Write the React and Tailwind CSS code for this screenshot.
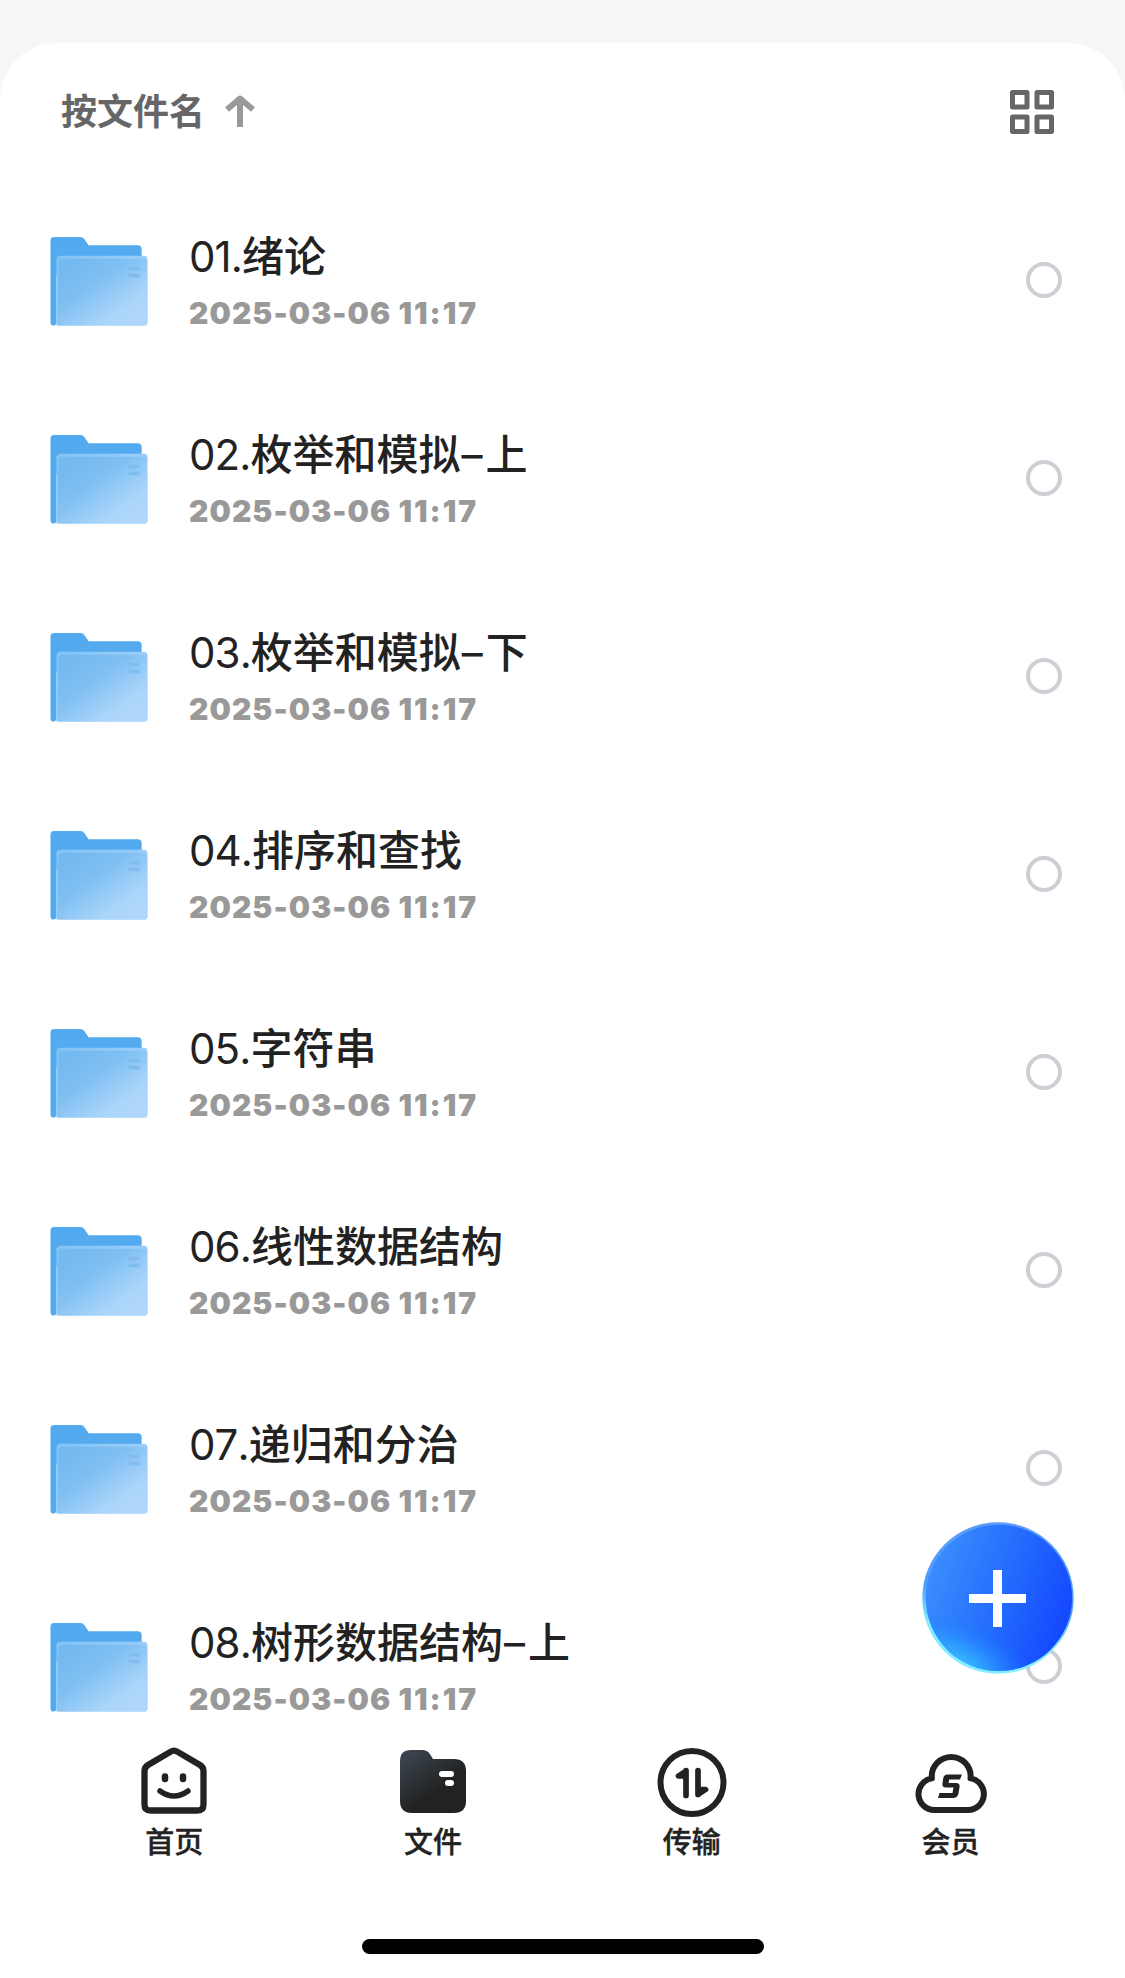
const files = [
  ["01.", "绪论"],
  ["02.", "枚举和模拟", "上"],
  ["03.", "枚举和模拟", "下"],
  ["04.", "排序和查找"],
  ["05.", "字符串"],
  ["06.", "线性数据结构"],
  ["07.", "递归和分治"],
  ["08.", "树形数据结构", "上"],
];

function FolderIcon() {
  return (
    <svg width="98" height="90" viewBox="-0.5 0 98.9 90" className="mt-[54px] shrink-0">
      <defs>
        <linearGradient id="front" x1="0.08" y1="0.2" x2="0.8" y2="0.95">
          <stop offset="0" stopColor="#74b9ef" />
          <stop offset="0.35" stopColor="#80c0f3" />
          <stop offset="0.8" stopColor="#aad4f9" />
          <stop offset="1" stopColor="#afd7fb" />
        </linearGradient>
        <linearGradient id="edge" x1="0" y1="0" x2="1" y2="0.2">
          <stop offset="0" stopColor="#82c4f5" />
          <stop offset="1" stopColor="#9ccefa" />
        </linearGradient>
      </defs>
      <path d="M0 4Q0 0.500 4 0.500H30Q33 0.500 34.500 3L38.500 9H88Q92 9 92 13V40H6V87Q6 90 3 90Q0 90 0 86Z" fill="#54aaee" />
      <path d="M6 24Q6 19.500 10 19.500H94Q98 19.500 98 24V86Q98 90 94 90H6Z" fill="url(#edge)" />
      <path d="M8 26Q8 22.500 11 22.500H93Q97 22.500 97 26V86Q97 90 93 90H8Z" fill="url(#front)" />
      <path d="M79 30.800h11v3.400h-11zM79 37.800h11v3.400h-11z" fill="#7fbcf0" />
    </svg>
  );
}

function FileRow({ file }) {
  return (
    <li className="flex h-[198px] items-start pl-[50px] pr-[63px] last:h-[144px]">
      <FolderIcon />
      <div className="ml-[41px] mt-[47px] flex-1">
        <div className="flex h-[56px] items-center whitespace-nowrap text-[42px] leading-[56px] text-[#222222]">
          <span className="font-normal tracking-[-0.9px] [font-kerning:none]">{file[0]}</span>
          <span className="font-medium">{file[1]}</span>
          {file[2] && (
            <>
              <span className="ml-px mr-[3px] font-normal">–</span>
              <span className="font-medium">{file[2]}</span>
            </>
          )}
        </div>
        <div className="mt-[16px] whitespace-nowrap text-[30px] font-black leading-[24px] tracking-[1.08px] text-[#999999]">
          2025-03-06 <span className="tracking-[2px]">11:17</span>
        </div>
      </div>
      <span className="mt-[80px] size-9 shrink-0 rounded-full border-4 border-[#cfced5]" />
    </li>
  );
}

function HomeIcon() {
  return (
    <svg width="72" height="72" viewBox="0 0 72 72" fill="none" stroke="#222" strokeLinecap="round" strokeLinejoin="round">
      <path d="M32.800 6.600Q36 4.600 39.200 6.600L62 20Q65.500 22.200 65.500 26V59.500Q65.500 65.500 59.500 65.500H12.500Q6.500 65.500 6.500 59.500V26Q6.500 22.200 10 20Z" strokeWidth="6.300" />
      <path d="M27 31.500v2.500M45 31.500v2.500" strokeWidth="6.500" />
      <path d="M22 46Q36 56 50 46" strokeWidth="5.500" />
    </svg>
  );
}

function FilesIcon() {
  return (
    <svg width="72" height="72" viewBox="0 0 72 72">
      <defs>
        <linearGradient id="dark" x1="0.1" y1="0.1" x2="0.55" y2="0.65">
          <stop offset="0" stopColor="#3a434d" />
          <stop offset="1" stopColor="#222222" />
        </linearGradient>
      </defs>
      <path d="M3 16Q3 5 14 5H25Q31 5 33.500 10L36 14H57Q69 14 69 26V56Q69 68 57 68H15Q3 68 3 56Z" fill="url(#dark)" />
      <rect x="42" y="26" width="15" height="6" rx="3" fill="#fff" />
      <rect x="48" y="35" width="9" height="6" rx="3" fill="#fff" />
    </svg>
  );
}

function TransferIcon() {
  return (
    <svg width="72" height="72" viewBox="0 0 72 72" fill="none" stroke="#222">
      <circle cx="36" cy="37.500" r="31.500" strokeWidth="6" />
      <path d="M30 25.500V50.500L30 26L22.500 31H30M42 49.500V25.500L42 49.500L49.500 44.500H42" strokeWidth="5.700" strokeLinecap="round" strokeLinejoin="round" />
    </svg>
  );
}

function MemberIcon() {
  return (
    <svg width="72" height="72" viewBox="0 0 72 72" fill="none">
      <path d="M19.300 65H53A15.900 15.900 0 0 0 55.500 33.400Q55.700 32.500 55.700 31.500A19.500 19.500 0 0 0 16.700 31.500Q16.700 32.500 16.900 33.400A15.900 15.900 0 0 0 19.300 65Z" stroke="#222" strokeWidth="6" strokeLinejoin="round" />
      <path d="M47 29.500H32.500Q29 29.500 28.300 33L27.500 38Q26.800 42.500 31 42.500H38.500L37.500 48H24.500L23 53H37.500Q42.500 53 43.500 48.500L44.500 42.500Q45.200 38 41 38H33.500L34.300 34.500H45Z" fill="#222" />
    </svg>
  );
}

const tabs = [
  ["首页", HomeIcon],
  ["文件", FilesIcon],
  ["传输", TransferIcon],
  ["会员", MemberIcon],
];

export default function App() {
  return (
    <div className="relative flex h-[1978px] w-[1125px] flex-col overflow-hidden bg-[#f4f6f8] font-['Inter','Noto_Sans_CJK_SC',sans-serif]">
      <div className="h-[43px] shrink-0 bg-[#f7f7f7]" />
      <main className="flex min-h-0 flex-1 flex-col rounded-t-[57px] bg-white">
        <header className="flex h-[139px] shrink-0 items-center justify-between pl-[61px] pr-[70px]">
          <div className="flex items-center">
            <span className="mb-[2px] text-[36px] font-bold leading-[48px] text-[#666666]">按文件名</span>
            <svg width="30" height="32" viewBox="0 0 30 32" className="mb-[3px] ml-[20px]" fill="none" stroke="#999" strokeWidth="6">
              <path d="M15 32V4" />
              <path d="M2 14.500L15 3.500L28 14.500" strokeLinejoin="round" />
            </svg>
          </div>
          <svg width="46" height="46" viewBox="0 0 46 46" className="mb-[2px]" fill="none" stroke="#666" strokeWidth="5" strokeLinejoin="round">
            <path d="M3.500 3.500h14.500v14.500h-14.500zM28 3.500h14.500v14.500H28zM3.500 28h14.500v14.500h-14.500zM28 28h14.500v14.500H28z" />
          </svg>
        </header>
        <ul className="h-[1530px] shrink-0">
          {files.map((f) => (
            <FileRow key={f[0]} file={f} />
          ))}
        </ul>
        <nav className="flex h-[227px] shrink-0 px-[45px] pt-[33px]">
          {tabs.map(([label, Icon]) => (
            <a key={label} className="flex flex-1 flex-col items-center">
              <Icon />
              <span className="mt-[6px] text-[29px] font-medium leading-[40px] text-[#222222] [-webkit-text-stroke:0.4px_#222222]">{label}</span>
            </a>
          ))}
        </nav>
        <div className="mx-auto h-[15px] w-[402px] shrink-0 rounded-full bg-black" />
      </main>
      <button className="absolute left-[922px] top-[1522px] size-[152px]" aria-label="新建">
        <svg width="152" height="152" viewBox="0 0 152 152">
          <defs>
            <linearGradient id="rim" x1="0.6" y1="0" x2="0.4" y2="1">
              <stop offset="0" stopColor="#5c9cf8" />
              <stop offset="0.5" stopColor="#4f9cff" />
              <stop offset="0.75" stopColor="#83edff" />
              <stop offset="1" stopColor="#83edff" />
            </linearGradient>
            <linearGradient id="fab" x1="0.05" y1="0.35" x2="0.95" y2="0.65">
              <stop offset="0" stopColor="#3a8bfd" />
              <stop offset="0.55" stopColor="#226afd" />
              <stop offset="1" stopColor="#1549ff" />
            </linearGradient>
            <radialGradient id="glow" cx="0" cy="0" r="1" gradientUnits="userSpaceOnUse" gradientTransform="translate(36 144) rotate(26) scale(92 48)">
              <stop offset="0" stopColor="#3cc6ff" />
              <stop offset="0.4" stopColor="#2ea8ff" stopOpacity="0.7" />
              <stop offset="1" stopColor="#1b74ff" stopOpacity="0" />
            </radialGradient>
          </defs>
          <circle cx="76" cy="76" r="75.700" fill="url(#rim)" />
          <circle cx="76.900" cy="75.900" r="73.200" fill="url(#fab)" />
          <circle cx="76.900" cy="75.900" r="73.200" fill="url(#glow)" />
          <path d="M75.500 48v57M47 76.500h57" stroke="#fff" strokeWidth="9" />
        </svg>
      </button>
    </div>
  );
}
